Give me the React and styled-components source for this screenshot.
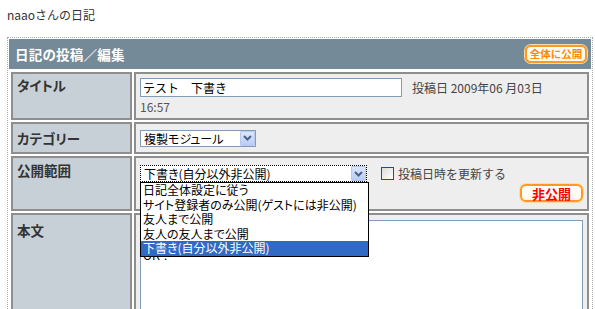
import React from "react";
import styled, { createGlobalStyle } from "styled-components";

const Global = createGlobalStyle`
  html, body { margin: 0; padding: 0; overflow: hidden; background: #fff; }
  body {
    font-family: "Noto Sans CJK JP", "Noto Sans", sans-serif;
    font-size: 12px;
    color: #333;
    font-feature-settings: "palt";
  }
`;

const Page = styled.div`
  padding: 0 0 0 7px;
  width: 586px;
`;

const SiteTitle = styled.div`
  height: 37px;
  box-sizing: border-box;
  padding-top: 7px;
  line-height: 15px;
  font-size: 12px;
  color: #333;
  font-feature-settings: normal;
`;

const Panel = styled.div`
  border: 1px dotted #a8a8a8;
  padding: 1px;
`;

const Header = styled.div`
  height: 30px;
  background: #748a98;
  display: flex;
  align-items: center;
  justify-content: space-between;
  padding: 0 4px 0 6px;
`;

const HeaderTitle = styled.div`
  color: #fff;
  font-weight: bold;
  font-size: 13.5px;
  font-feature-settings: normal;
  letter-spacing: 0.2px;
`;

const Badge = styled.div`
  box-sizing: border-box;
  width: ${(p) => p.w}px;
  height: 18px;
  border: 2px solid #ff9a1e;
  border-radius: 6px;
  background: linear-gradient(#ffffff, #fff7ee);
  box-shadow: 0 0 0 1px #ffd9a8;
  display: flex;
  align-items: center;
  justify-content: center;
  font-weight: bold;
  font-size: ${(p) => p.size}px;
  line-height: 1;
  color: ${(p) => p.color};
  font-feature-settings: normal;
`;

const Form = styled.div`
  display: grid;
  grid-template-columns: 121px 455px;
  grid-template-rows: 48px 32px 55px 200px;
  gap: 2px;
  padding: 3px 2px 2px 2px;
`;

const Label = styled.div`
  box-sizing: border-box;
  background: #c7cfd7;
  border: 2px solid #8e8e8e;
  padding: ${(p) => p.pt}px 4px 0 4px;
  font-weight: bold;
  font-size: 13.5px;
  line-height: 16px;
  color: #333;
`;

const Value = styled.div`
  box-sizing: border-box;
  background: #eeeeee;
  border: 2px solid #8e8e8e;
  padding: ${(p) => (p.top ? "5px 4px 0 4px" : "0 4px")};
  display: flex;
  flex-direction: column;
  justify-content: ${(p) => (p.top ? "flex-start" : "center")};
`;

const Line = styled.div`
  display: flex;
  align-items: center;
  gap: ${(p) => p.gap || 0}px;
`;

const TextInput = styled.input`
  box-sizing: border-box;
  width: 262px;
  height: 19px;
  border: 1px solid #7f9db9;
  padding: 0 2px;
  margin: 0;
  font-family: inherit;
  font-size: 12px;
  color: #000;
  background: #fff;
  outline: none;
`;

const Meta = styled.span`
  color: #444;
  font-size: 12px;
  font-feature-settings: normal;
`;

const Time = styled.div`
  color: #555;
  font-size: 12px;
  line-height: 15px;
  margin-top: 2px;
`;

const SelectBox = styled.div`
  position: relative;
  box-sizing: border-box;
  width: ${(p) => p.w}px;
  height: 17px;
  border: 1px ${(p) => (p.focus ? "dotted #000" : "solid #7f9db9")};
  background: #fff;
  display: flex;
  align-items: center;
  flex: none;
`;

const SelectText = styled.div`
  flex: 1;
  padding-left: 3px;
  font-size: 12px;
  line-height: 15px;
  color: #000;
  white-space: nowrap;
  overflow: hidden;
`;

const ArrowBtn = styled.div`
  box-sizing: border-box;
  width: 15px;
  height: 15px;
  border: 1px solid #b7c9ef;
  border-radius: 1px;
  background: linear-gradient(#dde7fd, #b8ccf7);
  display: flex;
  align-items: center;
  justify-content: center;
`;

const DropList = styled.div`
  position: absolute;
  top: 16px;
  left: -1px;
  width: 229px;
  box-sizing: border-box;
  border: 1px solid #000;
  background: #fff;
  z-index: 5;
`;

const DropItem = styled.div`
  height: 14.6px;
  line-height: 14.6px;
  padding-left: 2px;
  font-size: 12px;
  white-space: nowrap;
  color: ${(p) => (p.active ? "#fff" : "#000")};
  background: ${(p) => (p.active ? "#316ac5" : "transparent")};
`;

const Check = styled.span`
  box-sizing: border-box;
  width: 13px;
  height: 13px;
  margin: 0 4px 0 14px;
  border: 1px solid #1c5180;
  background: linear-gradient(135deg, #dcdcd7, #ffffff);
  flex: none;
`;

const CheckLabel = styled.span`
  color: #444;
  font-size: 12px;
  font-feature-settings: normal;
`;

const BadgeRow = styled.div`
  display: flex;
  justify-content: flex-end;
  margin-top: 2px;
`;

const TextArea = styled.textarea`
  box-sizing: border-box;
  width: 443px;
  height: 190px;
  border: 1px solid #7f9db9;
  padding: 0 2px;
  margin: 0;
  resize: none;
  font-family: inherit;
  font-size: 12px;
  line-height: 13.5px;
  color: #000;
  background: #fff;
  outline: none;
  overflow: hidden;
`;

const Arrow = () => (
  <ArrowBtn>
    <svg width="9" height="6" viewBox="0 0 9 6">
      <polyline points="1,1 4.5,4.5 8,1" fill="none" stroke="#4d6185" strokeWidth="2" />
    </svg>
  </ArrowBtn>
);

const options = [
  "日記全体設定に従う",
  "サイト登録者のみ公開(ゲストには非公開)",
  "友人まで公開",
  "友人の友人まで公開",
  "下書き(自分以外非公開)",
];

export default function App() {
  return (
    <>
      <Global />
      <Page>
        <SiteTitle>naaoさんの日記</SiteTitle>
        <Panel>
          <Header>
            <HeaderTitle>日記の投稿／編集</HeaderTitle>
            <Badge w={62} size={10.5} color="#ff8a00">全体に公開</Badge>
          </Header>
          <Form>
            <Label pt={3}>タイトル</Label>
            <Value>
              <Line gap={10}>
                <TextInput readOnly value="テスト　下書き" />
                <Meta>投稿日 2009年06 月03日</Meta>
              </Line>
              <Time>16:57</Time>
            </Value>

            <Label pt={6}>カテゴリー</Label>
            <Value>
              <SelectBox w={116}>
                <SelectText>複製モジュール</SelectText>
                <Arrow />
              </SelectBox>
            </Value>

            <Label pt={4}>公開範囲</Label>
            <Value>
              <Line>
                <SelectBox w={227} focus>
                  <SelectText>下書き(自分以外非公開)</SelectText>
                  <Arrow />
                  <DropList>
                    {options.map((o, i) => (
                      <DropItem key={o} active={i === options.length - 1}>{o}</DropItem>
                    ))}
                  </DropList>
                </SelectBox>
                <Check />
                <CheckLabel>投稿日時を更新する</CheckLabel>
              </Line>
              <BadgeRow>
                <Badge w={63} size={13} color="#ff0000">非公開</Badge>
              </BadgeRow>
            </Value>

            <Label pt={7}>本文</Label>
            <Value top>
              <TextArea readOnly value={"テスト\n下書き\nOK？"} />
            </Value>
          </Form>
        </Panel>
      </Page>
    </>
  );
}
